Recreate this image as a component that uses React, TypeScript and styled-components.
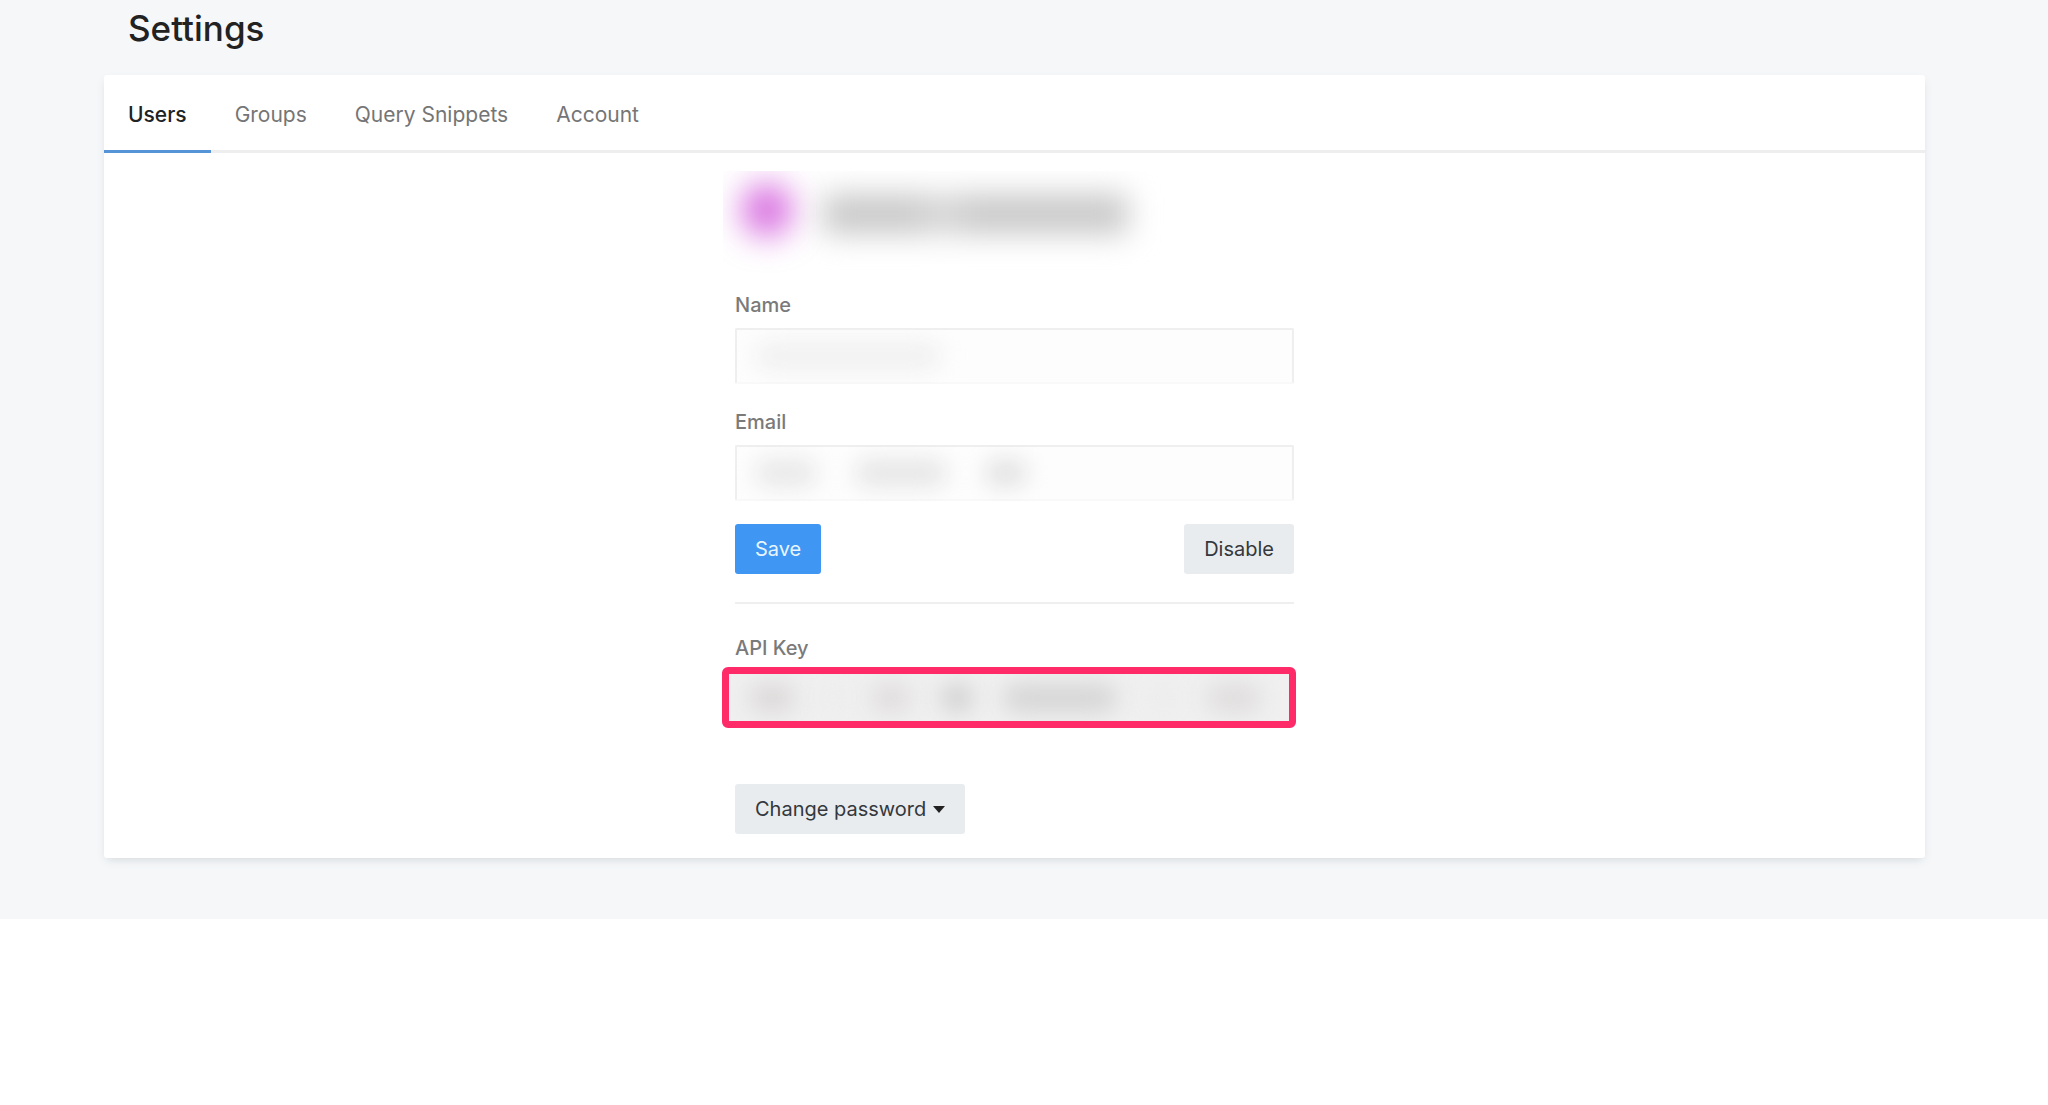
import React from "react";
import styled, { createGlobalStyle } from "styled-components";

const GlobalStyle = createGlobalStyle`
  *, *::before, *::after { box-sizing: border-box; }
  body {
    margin: 0;
    background: #fff;
    color: #323232;
    font: 400 20px/30px Inter, "Liberation Sans", sans-serif;
  }
`;

const Page = styled.main`
  padding: 8px 123px 61px 104px;
  background: #f5f7f9;
`;

const Title = styled.h1`
  margin: 0 0 27px;
  padding: 0 24px;
  color: #222;
  font-size: 35px;
  font-weight: 500;
  line-height: 40px;
`;

const Card = styled.section`
  background: #fff;
  border-radius: 3px;
  box-shadow: 0 4px 9px -3px rgba(102, 116, 120, 0.25);
`;

const Tabs = styled.nav`
  display: flex;
  box-shadow: inset 0 -3px 0 #eee;
`;

const Tab = styled.a<{ $active?: boolean }>`
  padding: 25px 24px 20px;
  border-bottom: 3px solid ${(p) => (p.$active ? "#5694d8" : "transparent")};
  color: ${(p) => (p.$active ? "#222" : "#757575")};
  font-size: 21px;
  font-weight: ${(p) => (p.$active ? 500 : 400)};
  text-decoration: none;
`;

const Content = styled.div`
  display: flex;
  flex-direction: column;
  align-items: stretch;
  max-width: 559px;
  margin: 0 auto;
  padding: 18px 0 24px;
`;

const Smudge = styled.span<{ $w: number; $color: string }>`
  flex: 0 0 auto;
  width: ${(p) => p.$w}px;
  height: 28px;
  border-radius: 14px;
  background: ${(p) => p.$color};
  filter: blur(11px);
`;

const Profile = styled.header`
  display: flex;
  align-items: flex-start;
  gap: 30px;
  height: 102px;
  margin: 0 0 17px -12px;
  padding: 12px 18px;
  overflow: hidden;
`;

const Avatar = styled.span`
  width: 52px;
  height: 54px;
  border-radius: 50%;
  background: #d870e0;
  filter: blur(16px);
`;

const ProfileName = styled.div`
  display: flex;
  padding-top: 11px;
  filter: blur(15px);
`;

const NamePart = styled.span<{ $w: number; $color: string }>`
  width: ${(p) => p.$w}px;
  height: 40px;
  background: ${(p) => p.$color};
`;

const Field = styled.div`
  display: flex;
  flex-direction: column;
  gap: 8px;
  margin-bottom: 23px;
`;

const Label = styled.label`
  color: #7a7a7a;
  font-weight: 500;
`;

const InputFrame = styled.div`
  position: relative;
  overflow: hidden;
`;

const Redaction = styled.div<{ $gap: number }>`
  position: absolute;
  inset: 0;
  display: flex;
  align-items: center;
  gap: ${(p) => p.$gap}px;
  padding: 0 20px;
  overflow: hidden;
  pointer-events: none;
`;

const Input = styled.input`
  display: block;
  width: 100%;
  height: 56px;
  padding: 0 16px;
  border: 2px solid #efefef;
  border-bottom-color: #f9f9f9;
  border-radius: 2px;
  background: #fdfdfd;
  color: inherit;
  font: inherit;
`;

const Actions = styled.div`
  display: flex;
  justify-content: space-between;
`;

const Button = styled.button<{ $primary?: boolean }>`
  display: inline-flex;
  align-items: center;
  align-self: flex-start;
  gap: 7px;
  height: 50px;
  padding: 0 20px;
  border: 0;
  border-radius: 3px;
  background: ${(p) => (p.$primary ? "#4096f3" : "#e9ecef")};
  color: ${(p) => (p.$primary ? "#e8f5ff" : "#34383c")};
  font: inherit;
`;

const Divider = styled.hr`
  width: 100%;
  height: 2px;
  margin: 28px 0 29px;
  border: 0;
  background: #efefef;
`;

const ApiField = styled(Field)`
  gap: 4px;
  margin-bottom: 56px;
`;

const Highlight = styled(InputFrame)`
  margin: 0 -2px 0 -13px;
  border: 7px solid #ff2b69;
  border-radius: 6px;
`;

const ApiInput = styled(Input)`
  height: 47px;
  border: 0;
  border-radius: 0;
  background: #f0f0f0;
`;

const tabs = ["Users", "Groups", "Query Snippets", "Account"];

export default function App() {
  return (
    <>
      <GlobalStyle />
      <Page>
        <Title>Settings</Title>
        <Card>
          <Tabs aria-label="Settings">
            {tabs.map((name, i) => (
              <Tab key={name} href="#" $active={i === 0} aria-current={i === 0 ? "page" : undefined}>
                {name}
              </Tab>
            ))}
          </Tabs>
          <Content>
            <Profile>
              <Avatar />
              <ProfileName>
                <NamePart $w={100} $color="#c8c8c8" />
                <NamePart $w={40} $color="#d4d4d4" />
                <NamePart $w={165} $color="#c8c8c8" />
              </ProfileName>
            </Profile>
            <Field>
              <Label htmlFor="name">Name</Label>
              <InputFrame>
                <Input id="name" type="text" />
                <Redaction $gap={0}>
                  <Smudge $w={186} $color="#f0f0f0" />
                </Redaction>
              </InputFrame>
            </Field>
            <Field>
              <Label htmlFor="email">Email</Label>
              <InputFrame>
                <Input id="email" type="email" />
                <Redaction $gap={38}>
                  <Smudge $w={62} $color="#e8e8e8" />
                  <Smudge $w={92} $color="#e6e6e6" />
                  <Smudge $w={42} $color="#e2e2e2" />
                </Redaction>
              </InputFrame>
            </Field>
            <Actions>
              <Button type="button" $primary>
                Save
              </Button>
              <Button type="button">Disable</Button>
            </Actions>
            <Divider />
            <ApiField>
              <Label htmlFor="api-key">API Key</Label>
              <Highlight>
                <ApiInput id="api-key" type="text" readOnly />
                <Redaction $gap={30}>
                  <Smudge $w={46} $color="#dcd8d9" />
                  <Smudge $w={16} $color="#ebebeb" />
                  <Smudge $w={40} $color="#e0dcdd" />
                  <Smudge $w={32} $color="#d0d0d0" />
                  <Smudge $w={114} $color="#d5d5d5" />
                  <Smudge $w={30} $color="#ececec" />
                  <Smudge $w={54} $color="#dfdcdc" />
                </Redaction>
              </Highlight>
            </ApiField>
            <Button type="button" aria-haspopup="true">
              Change password
              <svg width="12" height="7" viewBox="0 0 12 7" aria-hidden="true">
                <path d="M0 0h12L6 7z" fill="#222" />
              </svg>
            </Button>
          </Content>
        </Card>
      </Page>
    </>
  );
}
